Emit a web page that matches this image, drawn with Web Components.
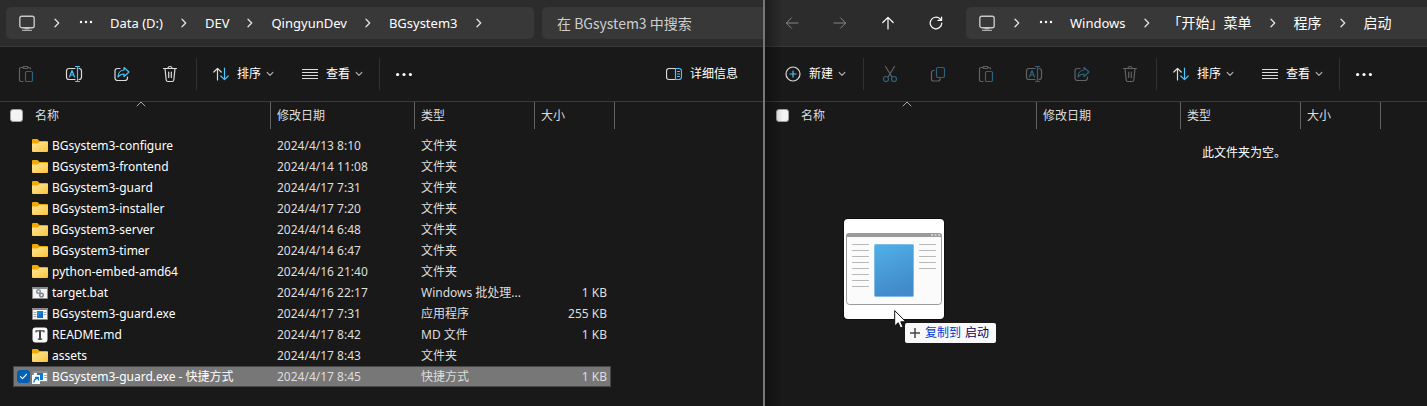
<!DOCTYPE html>
<html lang="zh-CN">
<head>
<meta charset="utf-8">
<title>BGsystem3</title>
<style>
  html, body { height: 100%; }
  body {
    margin: 0;
    display: grid;
    grid-template-columns: 765fr 662fr;
    grid-template-rows: minmax(100%, auto);
    background: #191919;
    color: #fff;
    font: 12px/16px "Noto Sans", "Noto Sans CJK SC", sans-serif;
    overflow: hidden;
  }
</style>
</head>
<body>
<explorer-window class="source">
  <address-bar slot="nav">
    <path-crumb>Data (D:)</path-crumb>
    <path-crumb>DEV</path-crumb>
    <path-crumb>QingyunDev</path-crumb>
    <path-crumb>BGsystem3</path-crumb>
  </address-bar>
  <search-box slot="nav" label="在 BGsystem3 中搜索"></search-box>
  <command-bar slot="commands">
    <tool-button icon="paste" label="粘贴" disabled></tool-button>
    <tool-button icon="rename" label="重命名"></tool-button>
    <tool-button icon="share" label="共享"></tool-button>
    <tool-button icon="trash" label="删除"></tool-button>
    <bar-divider></bar-divider>
    <menu-button icon="sort">排序</menu-button>
    <menu-button icon="view">查看</menu-button>
    <bar-divider></bar-divider>
    <tool-button icon="more" label="更多"></tool-button>
    <menu-button icon="details" plain>详细信息</menu-button>
  </command-bar>
  <file-list id="files"></file-list>
</explorer-window>
<explorer-window class="target" behind>
  <nav-buttons slot="nav"></nav-buttons>
  <address-bar slot="nav" open-end>
    <path-crumb>Windows</path-crumb>
    <path-crumb lang="zh">「开始」菜单</path-crumb>
    <path-crumb lang="zh">程序</path-crumb>
    <path-crumb lang="zh" last>启动</path-crumb>
  </address-bar>
  <command-bar slot="commands">
    <menu-button icon="new">新建</menu-button>
    <bar-divider></bar-divider>
    <tool-button icon="cut" label="剪切" disabled></tool-button>
    <tool-button icon="copy" label="复制" disabled></tool-button>
    <tool-button icon="paste" label="粘贴" disabled></tool-button>
    <tool-button icon="rename" label="重命名" disabled></tool-button>
    <tool-button icon="share" label="共享" disabled></tool-button>
    <tool-button icon="trash" label="删除" disabled></tool-button>
    <bar-divider></bar-divider>
    <menu-button icon="sort">排序</menu-button>
    <menu-button icon="view">查看</menu-button>
    <bar-divider></bar-divider>
    <tool-button icon="more" label="更多"></tool-button>
  </command-bar>
  <file-list empty="此文件夹为空。"></file-list>
  <drag-ghost slot="overlay" action="复制到">启动</drag-ghost>
</explorer-window>

<script>
const svg = (w, h, body, extra = '') =>
  `<svg width="${w}" height="${h}" viewBox="0 0 ${w} ${h}" fill="none" stroke-linecap="round" stroke-linejoin="round" aria-hidden="true" ${extra}>${body}</svg>`;

/* g: neutral stroke, b: accent stroke */
const ICONS = {
  paste: svg(16, 18, `<path class="g" d="M5 16.5H3A1.5 1.5 0 0 1 1.500 15V4A1.500 1.500 0 0 1 3 2.500H5M10 2.500H11A1.500 1.500 0 0 1 12.500 4M5 2.500a1 1 0 0 1 1-1H9a1 1 0 0 1 0 2H6a1 1 0 0 1-1-1Z"/><rect class="b" x="7.500" y="6.500" width="7" height="10" rx="1.200"/>`),
  rename: svg(18, 18, `<path class="g" d="M10 3.500H4A2.500 2.500 0 0 0 1.500 6V12A2.500 2.500 0 0 0 4 14.500H10M14 3.500A2.500 2.500 0 0 1 16.500 6V12A2.500 2.500 0 0 1 14 14.500"/><path class="b" d="M4.500 12 7 5.500 9.500 12M5.300 10H8.700M12.500 1.500V16.500M10.500 1.500H14.500M10.500 16.500H14.500"/>`),
  share: svg(18, 18, `<path class="g" d="M7 3.500H4.500A2.500 2.500 0 0 0 2 6V13A2.500 2.500 0 0 0 4.500 15.500H12A2.500 2.500 0 0 0 14.500 13V12"/><path class="b" d="M11 2.500 16 7 11 11.500V9C8 9 6.500 10 5 12 5 8.500 7 5.200 11 5Z"/>`),
  trash: svg(16, 18, `<path class="g" d="M1.500 3.500H14.500M6 3.500C6 .800 10 .800 10 3.500M3 3.500 4.200 15A1.700 1.700 0 0 0 6 16.500H10A1.700 1.700 0 0 0 11.800 15L13 3.500M6.700 7V12.500M9.300 7V12.500"/>`),
  cut: svg(16, 18, `<path class="g" d="M3.500 1.500 10 12M12.500 1.500 6 12"/><circle class="b" cx="4" cy="14" r="2.500"/><circle class="b" cx="12" cy="14" r="2.500"/>`),
  copy: svg(16, 18, `<path class="g" d="M4 5.500H3.500A2 2 0 0 0 1.500 7.500V14A2 2 0 0 0 3.500 16H8A2 2 0 0 0 10 14V13.500"/><rect class="b" x="6.500" y="2.500" width="8" height="10" rx="1.800"/>`),
  sort: svg(16, 16, `<path class="g" d="M4.500 14V2.500M.800 6 4.500 2.300 8.200 6"/><path class="b" d="M11.500 2V13.500M7.800 10 11.500 13.700 15.200 10"/>`),
  view: svg(16, 16, `<path class="g" style="stroke-width:1" stroke-linecap="butt" d="M0 3.500H16M0 6.500H16M0 9.500H16M0 12.500H16"/>`),
  details: svg(16, 16, `<path class="g" d="M9.500 2.500H3A2.500 2.500 0 0 0 .500 5V11A2.500 2.500 0 0 0 3 13.500H9.500"/><path class="b" d="M9.500 2.500H13A2.500 2.500 0 0 1 15.500 5V11A2.500 2.500 0 0 1 13 13.500H9.500ZM11.500 5.500H13.500M11.500 8H13.500M11.500 10.500H13.500"/>`),
  new: svg(16, 16, `<circle class="g" cx="8" cy="8" r="7"/><path class="b" d="M8 5V11M5 8H11"/>`),
  more: svg(16, 16, `<g class="f"><circle cx="1.600" cy="8.500" r="1.600"/><circle cx="8" cy="8.500" r="1.600"/><circle cx="14.400" cy="8.500" r="1.600"/></g>`),
  dots: svg(14, 16, `<g class="f"><circle cx="2" cy="7" r="1.200"/><circle cx="7" cy="7" r="1.200"/><circle cx="12" cy="7" r="1.200"/></g>`),
  down: svg(8, 8, `<path stroke="#a8a8a8" stroke-width="1.200" d="M1.200 2.500 4 5.300 6.800 2.500"/>`),
  right: svg(8, 10, `<path stroke="#e0e0e0" stroke-width="1.300" d="M2 1.200 5.700 5 2 8.800"/>`),
  monitor: svg(16, 16, `<rect stroke="#c8c8c8" stroke-width="1.400" x=".800" y="1.200" width="14.400" height="11.500" rx="2"/><path stroke="#c8c8c8" d="M6 13.500H10M3.500 15.300H12.500"/><path stroke="#777" d="M6 14.400H10"/>`),
  back: svg(14, 14, `<path stroke="currentColor" d="M13 7H1.500M6.500 1.800 1.300 7 6.500 12.200"/>`),
  forward: svg(14, 14, `<path stroke="currentColor" d="M1 7H12.500M7.500 1.800 12.700 7 7.500 12.200"/>`),
  up: svg(14, 14, `<path stroke="currentColor" stroke-width="1.200" d="M7 13V1.500M1.800 6.500 7 1.300 12.200 6.500"/>`),
  refresh: svg(14, 14, `<path stroke="currentColor" stroke-width="1.200" d="M12.800 7A5.800 5.800 0 1 1 11 2.800L12.500 4.200M12.600 1V4.400H9"/>`),
};
const ICON_CSS = `
  svg { display: block; flex: none; }
  .g, .b { stroke-width: 1.2; }
  .g { stroke: #dcdcdc; } .b { stroke: #4cc2ff; } .f { fill: #fff; }
  :host([disabled]) .g { stroke: #636363; } :host([disabled]) .b { stroke: #2e627e; }
  button { font: inherit; color: inherit; background: none; border: 0; padding: 0; margin: 0; }
`;

const FOLDER = svg(16, 16, `<defs><linearGradient id="fg" x1="0" y1="0" x2="1" y2="1"><stop offset="0" stop-color="#ffe69c"/><stop offset="1" stop-color="#fbc53a"/></linearGradient></defs><path fill="#f2a900" d="M0 2A1 1 0 0 1 1 1H5.500L7.500 3H15A1 1 0 0 1 16 4V8H0Z"/><path fill="url(#fg)" d="M0 5.500H5.500L7.500 4H16V13A1 1 0 0 1 15 14H1A1 1 0 0 1 0 13Z"/>`);
const APP = svg(16, 16, `<defs><linearGradient id="ag" x1="0" y1="0" x2="1" y2="1"><stop offset="0" stop-color="#1c9be6"/><stop offset="1" stop-color="#0a5cb5"/></linearGradient></defs><rect x=".500" y="2.500" width="15" height="11" fill="#f4f4f4" stroke="#8a8a8a"/><path stroke="#8a8a8a" stroke-width="2" d="M1 3H15"/><rect x="5" y="5" width="6" height="7" fill="url(#ag)"/><path stroke="#aaa" d="M2 6.500H4M2 8.500H4M2 10.500H4M12 6.500H14M12 8.500H14"/>`);
const FILE_ICONS = {
  folder: FOLDER,
  app: APP,
  bat: svg(16, 16, `<rect x=".500" y="2.500" width="15" height="11" fill="#f4f4f4" stroke="#8a8a8a"/><path stroke="#8a8a8a" stroke-width="2" d="M1 3H15"/><circle cx="6.500" cy="6.500" r="1.800" stroke="#8b98a5" stroke-width="1.500"/><circle cx="9.500" cy="10" r="1.800" stroke="#7b858e" stroke-width="1.500"/>`),
  md: svg(16, 16, `<rect x=".500" y=".500" width="15" height="15" rx="3" fill="#fafafa"/><path stroke="#444" stroke-width="1.200" stroke-linecap="butt" d="M4 5.500V3.800H12V5.500M5.800 12.200H10.200"/><path stroke="#444" stroke-width="2" stroke-linecap="butt" d="M8 3.500V12.500"/>`),
  link: svg(16, 16, `<rect x="1.500" y="2.500" width="14" height="10" fill="#f4f4f4" stroke="#8a8a8a"/><path stroke="#8a8a8a" stroke-width="2" d="M2 3H15"/><rect x="5" y="4" width="6" height="7" fill="#0f78cf"/><path stroke="#aaa" d="M12.500 6.500H14.500M12.500 8.500H14.500"/><rect x="0" y="6" width="8" height="9" fill="#fff"/><path stroke="#1572c8" stroke-width="1.300" d="M2 13C2 10.500 3 9.500 6 9M3.500 8.300H6.300V11"/>`),
};

const define = (name, render) => customElements.define(name, class extends HTMLElement {
  connectedCallback() {
    if (this.shadowRoot) return;
    this.attachShadow({ mode: 'open' }).innerHTML = render(this);
  }
});

define('explorer-window', () => `
  <style>
    :host { display: flex; flex-direction: column; min-width: 0; position: relative; overflow: hidden; box-sizing: border-box; background: #191919; }
    :host(.source) { border-right: 2px solid #777; }
    :host([behind])::before { content: ""; position: absolute; inset: 0 auto 0 0; width: 18px; background: linear-gradient(90deg, #0005, #0000); pointer-events: none; z-index: 1; }
    header { display: flex; gap: 8px; height: 46px; box-sizing: border-box; padding: 7px 0 7px 6px; background: #2c2c2c; }
    :host([behind]) header { padding-left: 3px; gap: 6px; }
    .commands { border: solid #3a3a3a; border-width: 1px 0; height: 54px; }
    main { flex: 1; }
    :host([behind]) main { padding-left: 1px; }
  </style>
  <header><slot name="nav"></slot></header>
  <div class="commands"><slot name="commands"></slot></div>
  <main><slot></slot></main>
  <slot name="overlay"></slot>`);

define('nav-buttons', () => `
  <style>
    ${ICON_CSS}
    :host { display: flex; flex: none; }
    button { width: 48px; display: grid; place-items: center; color: #fff; }
    button:disabled { color: #858585; }
  </style>
  <button aria-label="后退" disabled>${ICONS.back}</button>
  <button aria-label="前进" disabled>${ICONS.forward}</button>
  <button aria-label="向上">${ICONS.up}</button>
  <button aria-label="刷新">${ICONS.refresh}</button>`);

define('address-bar', () => `
  <style>
    ${ICON_CSS}
    :host { display: flex; align-items: center; flex: 528 528 528px; min-width: 0; box-sizing: border-box; padding-left: 13px; background: #383838; border-radius: 5px; overflow: hidden; }
    :host([open-end]) { border-radius: 5px 0 0 5px; }
    .step { display: flex; width: 44px; justify-content: center; }
    .dots { display: flex; width: 14px; margin-right: 17px; }
  </style>
  ${ICONS.monitor}<span class="step">${ICONS.right}</span><span class="dots">${ICONS.dots}</span><slot></slot>`);

define('path-crumb', el => `
  <style>
    ${ICON_CSS}
    :host { display: flex; align-items: center; flex: none; font-size: 13px; line-height: 20px; }
    :host([lang="zh"]) { font-size: 14px; }
    a { color: #fff; text-decoration: none; white-space: nowrap; }
    span { display: flex; width: 42px; justify-content: center; }
    :host([last]) span { display: none; }
  </style>
  <a href="#"><slot></slot></a><span>${ICONS.right}</span>`);

define('search-box', el => `
  <style>
    :host { display: flex; flex: 221 221 221px; min-width: 0; }
    input { flex: 1; min-width: 0; border: 0; outline: 0; padding: 0 15px; background: #383838; border-radius: 5px 0 0 5px; color: #fff; font: 14px/20px "Noto Sans CJK SC", sans-serif; }
    input::placeholder { color: #cecece; opacity: 1; }
  </style>
  <input type="search" placeholder="${el.getAttribute('label')}" aria-label="${el.getAttribute('label')}">`);

define('command-bar', () => `
  <style>
    :host { display: flex; height: 54px; padding-left: 2px; box-sizing: border-box; }
    ::slotted([plain]) { margin-left: auto; }
    ::slotted([icon="new"]) { margin: 0 1px 0 4px; }
  </style>
  <slot></slot>`);

define('bar-divider', () => `
  <style>:host { display: block; flex: none; width: 1px; height: 32px; margin: 11px 2px; background: #303030; }</style>`);

define('tool-button', el => `
  <style>
    ${ICON_CSS}
    :host { display: flex; flex: none; width: 48px; }
    :host([icon="more"]) { width: 44px; }
    button { flex: 1; display: grid; place-items: center; }
  </style>
  <button aria-label="${el.getAttribute('label')}" ${el.hasAttribute('disabled') ? 'disabled' : ''}>${ICONS[el.getAttribute('icon')]}</button>`);

define('menu-button', el => `
  <style>
    ${ICON_CSS}
    :host { display: flex; flex: none; }
    button { display: flex; align-items: center; padding: 0 14px; white-space: nowrap; }
    .label { margin: 0 5px 0 8px; }
    :host([plain]) button { padding-right: 20px; }
  </style>
  <button>${ICONS[el.getAttribute('icon')]}<span class="label"><slot></slot></span>${el.hasAttribute('plain') ? '' : ICONS.down}</button>`);

const COLUMNS = ['名称', '修改日期', '类型', '大小'];

customElements.define('file-list', class extends HTMLElement {
  constructor() { super(); this._files = []; }
  set files(list) { this._files = list; this.render(); }
  connectedCallback() { this.render(); }
  row([icon, name, date, type, size, selected]) {
    return `<tr class="${selected ? 'selected' : ''}">
      <td><div class="name">${selected ? `<input type="checkbox" checked aria-label="${name}">` : ''}<i>${FILE_ICONS[icon]}</i><span>${name}</span></div></td>
      <td>${date}</td><td>${type}</td><td class="size">${size}</td></tr>`;
  }
  render() {
    if (!this.shadowRoot) this.attachShadow({ mode: 'open' });
    const empty = this.getAttribute('empty');
    this.shadowRoot.innerHTML = `
      <style>
        :host { display: block; position: relative; }
        table { border-collapse: separate; border-spacing: 0; table-layout: fixed; width: 615px; }
        col:nth-child(1) { width: 271px; } col:nth-child(2) { width: 144px; }
        col:nth-child(3) { width: 120px; } col:nth-child(4) { width: 80px; }
        th { height: 27px; box-sizing: border-box; padding: 0 6px; border-right: 1px solid #636363; text-align: left; font-weight: 400; color: #dedede; }
        th div { display: flex; align-items: center; gap: 12px; padding-left: 4px; position: relative; }
        .caret { position: absolute; left: 130px; top: -7px; }
        .spacer td { height: 6px; }
        td { height: 21px; box-sizing: border-box; padding: 0 6px; line-height: 21px; color: #dedede; white-space: nowrap; overflow: hidden; text-overflow: ellipsis; }
        td:nth-child(3) { padding-right: 10px; }
        .name { display: flex; align-items: center; height: 21px; padding-left: 26px; color: #fff; position: relative; }
        .name span { margin-left: 4px; }
        .name input { margin: 0 2px 0 -15px; }
        i, svg { display: block; }
        .size { text-align: right; padding-right: 8px; }
        .selected { background: linear-gradient(#777, #777) 14px 1px / 596px 19px no-repeat, linear-gradient(#484848, #484848) 13px 0 / 598px 21px no-repeat; }
        input { appearance: none; flex: none; width: 13px; height: 13px; margin: 0; border: 1px solid #a0a0a0; border-radius: 3px; background: #f3f3f3; }
        input:checked { border-color: #005fb8; background: #005fb8; }
        .tick { position: absolute; left: 13px; top: 6px; }
        p { margin: 16px 0 0; padding-left: 436px; }
      </style>
      <table>
        <colgroup><col><col><col><col></colgroup>
        <thead><tr>${COLUMNS.map((c, i) => i ? `<th scope="col">${c}</th>` :
          `<th scope="col"><div><input type="checkbox" aria-label="全选"><span>${c}</span><span class="caret">${svg(10, 6, '<path stroke="#a8a8a8" d="M1 5 5 1 9 5"/>')}</span></div></th>`).join('')}</tr></thead>
        <tbody>${this._files.length ? '<tr class="spacer"><td colspan="4"></td></tr>' : ''}${this._files.map(f => this.row(f)).join('')}</tbody>
      </table>
      ${empty ? `<p>${empty}</p>` : ''}`;
    this.shadowRoot.querySelectorAll('input:checked').forEach(box =>
      box.insertAdjacentHTML('afterend', svg(9, 9, '<path stroke="#fff" stroke-width="1.200" d="M1.500 4.700 3.500 6.700 7.500 2.300"/>', 'class="tick"')));
  }
});

define('drag-ghost', el => `
  <style>
    :host { position: absolute; left: 79px; top: 219px; }
    .card { width: 100px; height: 100px; border-radius: 4px; background: #fff; box-shadow: 0 0 0 1px #0006; }
    svg { display: block; }
    .pointer { position: absolute; left: 50px; top: 91px; }
    .tip { position: absolute; left: 61px; top: 104px; display: flex; align-items: center; height: 20px; padding: 0 7px 0 5px; gap: 5px; border-radius: 2px; background: #f9f9f9; color: #003bd2; white-space: nowrap; }
    .tip b { font-weight: 400; color: #00005f; margin-left: -1px; }
  </style>
  <div class="card">${svg(100, 100, `
    <defs><linearGradient id="dg" x1="0" y1="0" x2=".300" y2="1"><stop offset="0" stop-color="#50b0e8"/><stop offset="1" stop-color="#428aca"/></linearGradient></defs>
    <rect x="2.500" y="14.500" width="95" height="71" rx="3" fill="#fbfbfb" stroke="#9b9b9b"/>
    <path fill="#9b9b9b" d="M2 18V17A3 3 0 0 1 5 14H95A3 3 0 0 1 98 17V18Z"/>
    <path stroke="#ddd" stroke-width="1.500" stroke-linecap="butt" d="M87 16H89M90.500 16H92.500M94 16H96"/>
    <rect x="30.500" y="25.500" width="39" height="52" rx="1" fill="url(#dg)" stroke="#7fbce8"/>
    <path stroke="#b8b8b8" d="M8.500 25.500H24.500M8.500 31.500H24.500M8.500 37.500H24.500M8.500 43.500H24.500M8.500 49.500H24.500M8.500 55.500H24.500M8.500 61.500H24.500M8.500 67.500H24.500M75.500 25.500H91.500M75.500 31.500H91.500M75.500 37.500H91.500M75.500 43.500H91.500M75.500 49.500H91.500"/>`)}</div>
  <div class="tip">${svg(10, 10, '<path stroke="#444" stroke-width="1.500" stroke-linecap="butt" d="M5 0V10M0 5H10"/>')}<span>${el.getAttribute('action')}</span><b><slot></slot></b></div>
  <div class="pointer">${svg(13, 20, '<path fill="#fff" stroke="#111" d="M.700 1V16L4.200 12.700 6.500 18 9 17 6.800 11.800H11.500Z"/>')}</div>`);

document.getElementById('files').files = [
  ['folder', 'BGsystem3-configure', '2024/4/13 8:10', '文件夹', ''],
  ['folder', 'BGsystem3-frontend', '2024/4/14 11:08', '文件夹', ''],
  ['folder', 'BGsystem3-guard', '2024/4/17 7:31', '文件夹', ''],
  ['folder', 'BGsystem3-installer', '2024/4/17 7:20', '文件夹', ''],
  ['folder', 'BGsystem3-server', '2024/4/14 6:48', '文件夹', ''],
  ['folder', 'BGsystem3-timer', '2024/4/14 6:47', '文件夹', ''],
  ['folder', 'python-embed-amd64', '2024/4/16 21:40', '文件夹', ''],
  ['bat', 'target.bat', '2024/4/16 22:17', 'Windows 批处理...', '1 KB'],
  ['app', 'BGsystem3-guard.exe', '2024/4/17 7:31', '应用程序', '255 KB'],
  ['md', 'README.md', '2024/4/17 8:42', 'MD 文件', '1 KB'],
  ['folder', 'assets', '2024/4/17 8:43', '文件夹', ''],
  ['link', 'BGsystem3-guard.exe - 快捷方式', '2024/4/17 8:45', '快捷方式', '1 KB', true],
];
</script>
</body>
</html>
